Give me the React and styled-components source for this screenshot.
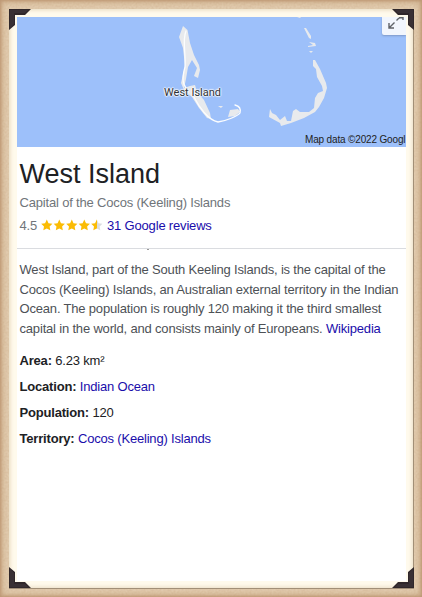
import React from "react";
import styled, { createGlobalStyle } from "styled-components";

const Global = createGlobalStyle`
  *{box-sizing:border-box}
  body{margin:0;background:#fff;font-family:"Liberation Sans",Arial,sans-serif}
`;
const Frame = styled.main`
  position:relative;width:422px;height:597px;overflow:hidden;
  padding:9px 8px 8px 9px;background:#e2cdb0;
  box-shadow:inset 0 0 3px 1px #bd9875, inset 0 0 6px 2px #cbaa87;
`;
const Grain = styled.svg`position:absolute;inset:0;width:100%;height:100%;opacity:.2;pointer-events:none`;
const Mat = styled.div`
  position:relative;width:405px;height:580px;padding:8px;background:#fffaec;
  border-right:1px solid #a28f77;border-bottom:1px solid #a28f77;
  box-shadow:inset 1px 1px 4px #e9dcc3, inset -1px -1px 4px #eee3cd;
`;
const Panel = styled.article`width:389px;height:564px;background:#fff;overflow:hidden`;
const Corner = styled.svg`
  position:absolute;width:22px;height:22px;
  ${p => p.$v}:0;${p => p.$h}:${p => p.$h === "right" ? "-1px" : "0"};
  transform:scale(${p => p.$h === "right" ? -1 : 1},${p => p.$v === "bottom" ? -1 : 1});
`;
const MapArea = styled.div`position:relative;height:130px;background:#9dc0fa;overflow:hidden`;
const Islands = styled.svg`display:block;width:389px;height:130px`;
const MapLabel = styled.span`
  position:absolute;left:147px;top:69px;font:400 11px/14px Roboto,sans-serif;color:#303338;white-space:nowrap;
  text-shadow:0 0 2px #fff,1px 0 1px #ffffffb0,-1px 0 1px #ffffffb0,0 1px 1px #ffffffb0,0 -1px 1px #ffffffb0;
`;
const Credit = styled.span`position:absolute;left:288px;top:117px;font-size:10px;line-height:12px;color:#222;white-space:nowrap;letter-spacing:-.16px`;
const Expand = styled.button`
  position:absolute;right:0;top:0;width:24px;height:18px;padding:0;border:0;border-radius:0 0 0 2px;background:#f2f6fd;
  box-shadow:0 1px 2px #60749780;
  svg{display:block}
`;
const Header = styled.header`position:relative;height:102px;padding:10px 2.5px 0;border-bottom:1px solid #dadce0`;
const Notch = styled.i`position:absolute;left:130px;bottom:-2px;width:2px;height:1px;background:#999`;
const Title = styled.h1`margin:0;font-size:27px;line-height:35px;font-weight:400;color:#202124`;
const Subtitle = styled.div`margin-top:3px;font-size:13px;letter-spacing:-.178px;line-height:16px;color:#70757a`;
const Rating = styled.div`display:flex;align-items:center;height:16px;margin-top:6px;font-size:13px;letter-spacing:-.178px;color:#70757a`;
const Stars = styled.svg`width:62px;height:12px;margin:0 4px 0 4px`;
const Link = styled.a`color:#1a0dab;text-decoration:none`;
const Description = styled.p`margin:11px 0 0 2.5px;font-size:13px;letter-spacing:-.18px;line-height:19.7px;color:#4d5156;white-space:nowrap`;
const Facts = styled.dl`margin:9px 0 0 2.5px`;
const Fact = styled.div`
  height:26px;display:flex;gap:3.5px;align-items:center;font-size:13px;letter-spacing:-.19px;color:#202124;
  dt{font-weight:700} dd{margin:0}
`;
const corners = [["top","left"],["top","right"],["bottom","left"],["bottom","right"]];
const facts = [["Area","6.23 km²"],["Location","Indian Ocean",true],["Population","120"],["Territory","Cocos (Keeling) Islands",true]];
const star = "M5.8 .6 7.5 4.2l3.9.5-2.8 2.7.7 3.9-3.5-1.9-3.5 1.9.7-3.9L.2 4.7l3.9-.5z";

export default function App(){
  return <><Global/><Frame>
    <Grain aria-hidden="true"><filter id="grain"><feTurbulence type="fractalNoise" baseFrequency=".5" numOctaves="2"/><feColorMatrix values="0 0 0 0 .5 0 0 0 0 .3 0 0 0 0 .15 1.8 0 0 0 -.5"/></filter><rect width="422" height="597" filter="url(#grain)"/></Grain>
    <Mat>
      <Panel>
        <MapArea>
          <Islands viewBox="17 17 389 130">
            <g fill="#e8eaed">
              <path d="M183 26 187.5 30 190 43 194 55 199 65 200 70 198 78 194 76 197 68 192 60 188 67 186 79 184 88 190 86 195 85 197 92 204 100 210 113 211 119 207 118 199 108 192 97 184 90 181 83 185 66 183 48 179 37z"/>
              <path d="M228 117 230 110 238 109 240 112 235 116zM218 106l5 0-2 2z"/>
              <path d="M269 117 270 109 272 113 276 115 280 120 285 116 287 121 291 121 293 111 296 109 300 112 309 112 314 108 315 98 318 93 323 91 322 86 317 77 316 69 313 66 313 60 315 60 320 69 326 83 327 88 324 98 319 107 315 112 304 118 291 123 281 126 280 123z"/>
              <path d="m304 28 2 0 5 8 0 3-2-1zm5 14 6 1 1 3-8 1 0-1 5-1zm0 9 4 0-2 2zM297 17h4l-1 1z"/>
            </g>
            <g fill="none" stroke="#fcfdfe" strokeWidth="1.3" strokeLinecap="round"><path d="M186 31C182 40 186 53 185 67C181 81 184 85 186 88"/><path d="M194 97C199 107 208 120 218 122C226 121 238 116 240 113C241 109 239 106 235 105"/></g>
          </Islands>
          <MapLabel>West Island</MapLabel><Credit>Map data ©2022 Googl</Credit>
          <Expand aria-label="Expand map"><svg width="24" height="18" viewBox="0 0 24 18" fill="none" stroke="#606368" strokeWidth="1.4"><path d="M7 6v5h5M7.5 10.5 12.5 5.5M14.5 3.5 17 1M17 .7h4V3"/></svg></Expand>
        </MapArea>
        <Header><Title>West Island</Title><Subtitle>Capital of the Cocos (Keeling) Islands</Subtitle>
          <Rating>4.5<Stars viewBox="0 0 62 12"><defs><linearGradient id="half"><stop offset=".5" stopColor="#fbbc04"/><stop offset=".5" stopColor="#dadce0"/></linearGradient></defs>{[0,1,2,3,4].map(i=><path key={i} transform={`translate(${i*12.5})`} d={star} fill={i===4?"url(#half)":"#fbbc04"}/>)}</Stars><Link>31 Google reviews</Link></Rating><Notch/>
        </Header>
        <Description>West Island, part of the South Keeling Islands, is the capital of the<br/>Cocos (Keeling) Islands, an Australian external territory in the Indian<br/>Ocean. The population is roughly 120 making it the third smallest<br/>capital in the world, and consists mainly of Europeans. <Link>Wikipedia</Link></Description>
        <Facts>{facts.map(([k,v,l])=><Fact key={k}><dt>{k}:</dt><dd>{l?<Link>{v}</Link>:v}</dd></Fact>)}</Facts>
      </Panel>
      {corners.map(([v,h])=><Corner key={v+h} $v={v} $h={h} viewBox="0 0 22 22"><path d="M0 0h22l-6 6H6v10l-6 5z" fill="#30272a"/><path d="M1 1h18l-3 3H5v11l-4 4z" fill="#393034"/></Corner>)}
    </Mat>
  </Frame></>;
}
